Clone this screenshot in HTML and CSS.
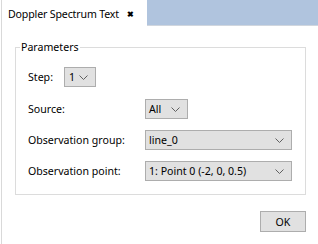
FILE: index.html
```html
<!DOCTYPE html>
<html>
<head>
<meta charset="utf-8">
<link rel="stylesheet" href="styles.css">
</head>
<body>
<div class="tabbar">
  <div class="tab">
    <span class="tab-title">Doppler Spectrum Text</span>
    <span class="tab-close">&#x2716;</span>
  </div>
  <div class="tab-fill"></div>
</div>
<div class="panel">
  <div class="group">
    <span class="group-title">Parameters</span>
    <div class="row step-row">
      <span class="label">Step:</span>
      <div class="combo combo-step"><span class="combo-text">1</span><svg class="chev" width="9" height="5" viewBox="0 0 9 5"><polyline points="0.5,0.5 4.5,4.5 8.5,0.5" fill="none" stroke="#606060" stroke-width="1"/></svg></div>
    </div>
    <div class="grid">
      <span class="label">Source:</span>
      <div class="combo combo-all"><span class="combo-text">All</span><svg class="chev" width="9" height="5" viewBox="0 0 9 5"><polyline points="0.5,0.5 4.5,4.5 8.5,0.5" fill="none" stroke="#606060" stroke-width="1"/></svg></div>
      <span class="label">Observation group:</span>
      <div class="combo combo-wide"><span class="combo-text">line_0</span><svg class="chev" width="9" height="5" viewBox="0 0 9 5"><polyline points="0.5,0.5 4.5,4.5 8.5,0.5" fill="none" stroke="#606060" stroke-width="1"/></svg></div>
      <span class="label">Observation point:</span>
      <div class="combo combo-wide"><span class="combo-text">1: Point 0 (-2, 0, 0.5)</span><svg class="chev" width="9" height="5" viewBox="0 0 9 5"><polyline points="0.5,0.5 4.5,4.5 8.5,0.5" fill="none" stroke="#606060" stroke-width="1"/></svg></div>
    </div>
  </div>
  <div class="actions">
    <button class="btn">OK</button>
  </div>
</div>
</body>
</html>
```
FILE: styles.css
```css
html, body {
  margin: 0;
  padding: 0;
  background: #ffffff;
}
body {
  width: 318px;
  height: 244px;
  overflow: hidden;
  font-family: "Noto Sans", "Open Sans", sans-serif;
  font-size: 10.6px;
  color: #000000;
}
.tabbar {
  display: flex;
  height: 27px;
}
.tab {
  margin-left: 1px;
  border-left: 1px solid #d9d9d9;
  background: #ffffff;
  display: flex;
  align-items: center;
  padding-left: 6px;
  box-sizing: border-box;
  width: 146px;
  white-space: nowrap;
}
.tab-title {
  letter-spacing: -0.15px;
}
.tab-close {
  margin-left: auto;
  font-size: 8px;
  font-weight: bold;
  margin-right: 13px;
}
.tab-fill {
  flex: 1;
  height: 26px;
  background: #b0c4de;
  border-bottom: 1px solid #d0d6de;
  box-sizing: border-box;
}
.panel {
  margin-left: 1px;
  border-left: 1px solid #d9d9d9;
  height: 217px;
  box-sizing: border-box;
  padding: 20px 12px 0 13px;
}
.group {
  position: relative;
  border: 1px solid #dcdcdc;
  padding: 19px 0 0 12px;
  height: 148px;
  box-sizing: border-box;
}
.group-title {
  position: absolute;
  left: 4px;
  top: -8px;
  line-height: 14px;
  padding: 0 1px;
  background: #ffffff;
  white-space: nowrap;
}
.row {
  display: flex;
  align-items: center;
  height: 20px;
}
.step-row .label {
  width: 36px;
}
.grid {
  margin-top: 12px;
  display: grid;
  grid-template-columns: 117px 147px;
  row-gap: 11px;
  align-items: center;
}
.label {
  line-height: 20px;
  white-space: nowrap;
}
.combo {
  height: 20px;
  box-sizing: border-box;
  border: 1px solid #adadad;
  background: #e1e1e1;
  display: flex;
  align-items: center;
  padding-left: 3px;
  padding-right: 7px;
}
.combo-text {
  flex: 1;
  white-space: nowrap;
}
.combo-step {
  width: 32px;
  padding-left: 4px;
}
.combo-all {
  width: 43px;
}
.combo-wide {
  width: 147px;
}
.chev {
  display: block;
}
.actions {
  display: flex;
  justify-content: flex-end;
  padding-top: 16px;
}
.btn {
  width: 46px;
  height: 21px;
  border: 1px solid #adadad;
  background: #e1e1e1;
  font-family: inherit;
  font-size: 10.6px;
  color: #000;
  padding: 0;
  margin: 0;
}
```
